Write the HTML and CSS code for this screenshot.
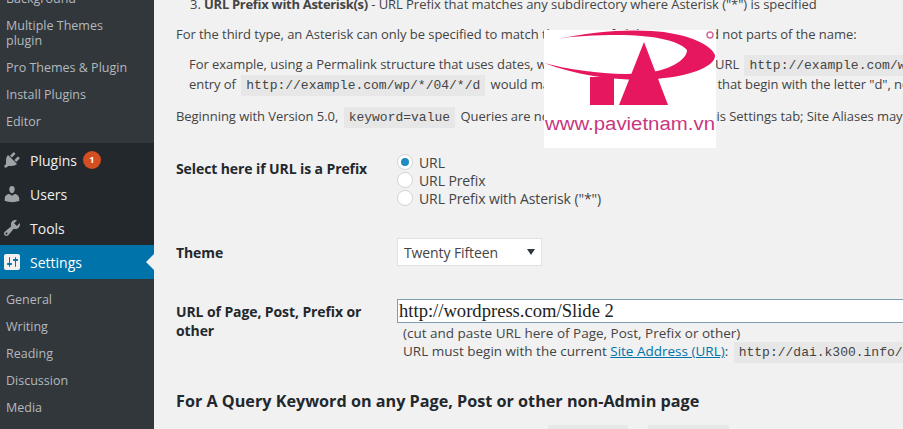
FILE: index.html
```html
<!DOCTYPE html>
<html lang="en">

<head>
    <meta charset="UTF-8">
    <title>Site settings</title>
    <link rel="stylesheet" href="styles.css">
</head>

<body>
    <div class="admin">
        <aside class="sidebar">
            <ul class="submenu submenu-top">
                <li>Background</li>
                <li>Multiple Themes plugin</li>
                <li>Pro Themes &amp; Plugin</li>
                <li>Install Plugins</li>
                <li>Editor</li>
            </ul>
            <ul class="menu">
                <li class="menu-item">
                    <svg class="menu-icon" viewBox="0 0 20 20"><path d="M13.11 4.36L9.87 7.6 8 5.73l3.24-3.24c.35-.34 1.05-.2 1.56.32.52.51.66 1.21.31 1.55zm-8 1.77l.91-1.12 9.01 9.01-1.19.84c-.71.71-2.63 1.16-3.82 1.16H6.14L4.9 17.26c-.59.59-1.54.59-2.12 0-.59-.58-.59-1.53 0-2.12l1.24-1.24v-3.88c0-1.13.4-3.19 1.09-3.89zm7.26 3.97l3.24-3.24c.34-.35 1.04-.21 1.55.31.52.51.66 1.21.31 1.55l-3.24 3.25z" /></svg>
                    <span>Plugins</span>
                    <span class="badge">1</span>
                </li>
                <li class="menu-item">
                    <svg class="menu-icon" viewBox="0 0 20 20"><path d="M10 9.25c-2.27 0-2.73-3.44-2.73-3.44C7 4.02 7.82 2 9.97 2c2.16 0 2.98 2.02 2.71 3.81 0 0-.41 3.44-2.68 3.44zm0 2.57L12.72 10c2.39 0 4.52 2.33 4.52 4.53v2.49s-3.65 1.13-7.24 1.13c-3.65 0-7.24-1.13-7.24-1.13v-2.49c0-2.25 1.94-4.48 4.47-4.48z" /></svg>
                    <span>Users</span>
                </li>
                <li class="menu-item">
                    <svg class="menu-icon" viewBox="0 0 20 20"><path d="M16.68 9.77c-1.34 1.34-3.3 1.67-4.95.99l-5.41 6.52c-.99.99-2.59.99-3.58 0s-.99-2.59 0-3.57l6.52-5.42c-.68-1.65-.35-3.61.99-4.95 1.28-1.28 3.12-1.62 4.72-1.06l-2.89 2.89 2.82 2.82 2.86-2.87c.53 1.58.18 3.39-1.08 4.65zM3.81 16.21c.4.39 1.04.39 1.43 0 .4-.4.4-1.04 0-1.43-.39-.4-1.03-.4-1.43 0-.39.39-.39 1.03 0 1.43z" /></svg>
                    <span>Tools</span>
                </li>
                <li class="menu-item active">
                    <svg class="menu-icon" viewBox="0 0 20 20"><path d="M18 16V4c0-1.100-.9-2-2-2H4c-1.100 0-2 .9-2 2v12c0 1.100.9 2 2 2h12c1.100 0 2-.9 2-2zM8 11h1c.55 0 1 .45 1 1s-.45 1-1 1H8v1.500c0 .28-.22.5-.5.5s-.5-.22-.5-.5V13H6c-.55 0-1-.45-1-1s.45-1 1-1h1V5.500c0-.28.22-.5.5-.5s.5.22.5.5V11zm5-2h-1c-.55 0-1-.45-1-1s.45-1 1-1h1V5.500c0-.28.22-.5.5-.5s.5.22.5.5V7h1c.55 0 1 .45 1 1s-.45 1-1 1h-1v5.500c0 .28-.22.5-.5.5s-.5-.22-.5-.5V9z" /></svg>
                    <span>Settings</span>
                </li>
            </ul>
            <ul class="submenu">
                <li>General</li>
                <li>Writing</li>
                <li>Reading</li>
                <li>Discussion</li>
                <li>Media</li>
                <li>Permalinks</li>
            </ul>
        </aside>

        <main class="content">
            <p class="line step">3. <b>URL Prefix with Asterisk(s)</b> - URL Prefix that matches any subdirectory where Asterisk ("*") is specified</p>
            <p class="line">For the third type, an Asterisk can only be specified to match the name of Slide or Post and not parts of the name:</p>
            <p class="line example">For example, using a Permalink structure that uses dates, where Year and Month are in URL <code>http://example.com/wp/2017/04/slide</code><br>entry of <code>http://example.com/wp/*/04/*/d</code> would match all of the Slides for April that begin with the letter "d", not</p>
            <p class="line">Beginning with Version 5.0, <code>keyword=value</code> Queries are now also fully supported on this Settings tab; Site Aliases may also be used</p>

            <div class="field field-type">
                <label class="field-label">Select here if URL is a Prefix</label>
                <div class="radios">
                    <div class="radio-row"><span class="radio checked"></span>URL</div>
                    <div class="radio-row"><span class="radio"></span>URL Prefix</div>
                    <div class="radio-row"><span class="radio"></span>URL Prefix with Asterisk ("*")</div>
                </div>
            </div>

            <div class="field field-theme">
                <label class="field-label">Theme</label>
                <div class="select">Twenty Fifteen<span class="select-arrow"></span></div>
            </div>

            <div class="field field-url">
                <label class="field-label">URL of Page, Post, Prefix or other</label>
                <div class="url-col">
                    <div class="url-input">http://wordpress.com/Slide 2</div>
                    <div class="url-note">(cut and paste URL here of Page, Post, Prefix or other)<br>URL must begin with the current <a href="#">Site Address (URL)</a>: <code>http://dai.k300.info/</code></div>
                </div>
            </div>

            <h2 class="section-title">For A Query Keyword on any Page, Post or other non-Admin page</h2>

            <div class="chips">
                <span class="chip"></span>
                <span class="chip chip-wide"></span>
            </div>
        </main>
    </div>

    <div class="logo">
        <svg viewBox="0 0 172 118" width="172" height="118">
            <path class="logo-pink" d="M13 9C45 2 80 -1 108 1C140 3 166 13 171 25C172 35 150 45 120 48C95 52 45 50 0 33C30 41 70 46 100 43C125 41 143 30 143 20C135 10 105 5 75 5C50 5 30 6 13 9Z" />
            <rect class="logo-pink" x="46" y="47" width="24" height="28" />
            <path class="logo-pink" d="M100 12L124 75H75Z" />
            <circle class="logo-mark" cx="166" cy="5" r="3" />
            <text class="logo-text" x="1" y="100" textLength="170" lengthAdjust="spacingAndGlyphs">www.pavietnam.vn</text>
        </svg>
    </div>
</body>

</html>
```

FILE: styles.css
```css
* {
    margin: 0;
    padding: 0;
    box-sizing: border-box;
}

html,
body {
    width: 903px;
    height: 429px;
    overflow: hidden;
}

body {
    background: #f1f1f1;
    font-family: "Open Sans", sans-serif;
    font-size: 13px;
    color: #444;
    position: relative;
}

ul {
    list-style: none;
}

.admin {
    display: flex;
    height: 429px;
    overflow: hidden;
}

.sidebar {
    width: 154px;
    flex-shrink: 0;
    background: #23282d;
    margin-top: -15px;
}

.submenu {
    background: #32373c;
    padding: 7px 0 8px;
    color: #b4b9be;
    font-size: 12.5px;
}

.submenu-top {
    padding-top: 0;
}

.submenu li {
    padding: 6px 20px 6px 6px;
    line-height: 15px;
}

.menu-item {
    display: flex;
    align-items: center;
    height: 34px;
    color: #eee;
    font-size: 14px;
    position: relative;
}

.menu-icon {
    width: 20px;
    height: 20px;
    margin: 0 8px 0 2px;
    fill: #9ea3a8;
    flex-shrink: 0;
}

.active {
    background: #0073aa;
    color: #fff;
}

.active .menu-icon {
    fill: #f1f1f1;
}

.active::after {
    content: "";
    position: absolute;
    right: 0;
    top: 9px;
    border: 8px solid transparent;
    border-right-color: #f1f1f1;
    border-left-width: 0;
}

.badge {
    width: 18px;
    height: 18px;
    margin-left: 6px;
    border-radius: 50%;
    background: #d54e21;
    color: #fff;
    font-size: 9px;
    font-weight: 700;
    text-align: center;
    line-height: 18px;
}

.content {
    flex: 1;
    min-width: 0;
    padding-left: 22px;
    margin-top: -5px;
    overflow: hidden;
}

.line {
    line-height: 18px;
    margin-bottom: 12px;
    white-space: nowrap;
    letter-spacing: -0.05px;
}

.step {
    padding-left: 14px;
}

.step b {
    letter-spacing: -0.3px;
}

.example {
    padding-left: 13px;
    line-height: 19px;
}

code {
    font-family: "Liberation Mono", monospace;
    font-size: 13px;
    letter-spacing: 0;
    background: #e7e7e7;
    padding: 3px 5px;
    margin: 0 2px;
}

.field {
    display: grid;
    grid-template-columns: 221px 1fr;
}

.field-label {
    font-weight: 700;
    font-size: 14px;
    letter-spacing: -0.1px;
    line-height: 19px;
    color: #23282d;
    padding-right: 25px;
}

.field-type {
    margin-top: 32px;
}

.radios {
    margin-top: -6px;
}

.radio-row {
    display: flex;
    align-items: center;
    height: 18px;
    font-size: 14px;
    letter-spacing: -0.1px;
}

.radio {
    width: 16px;
    height: 16px;
    margin-right: 6px;
    border: 1px solid #d5d5d5;
    border-radius: 50%;
    background: #fff;
    position: relative;
}

.checked::after {
    content: "";
    position: absolute;
    left: 3px;
    top: 3px;
    width: 8px;
    height: 8px;
    border-radius: 50%;
    background: #1e8cbe;
}

.field-theme {
    margin-top: 31px;
    align-items: center;
}

.select {
    display: flex;
    align-items: center;
    justify-content: space-between;
    width: 145px;
    height: 28px;
    padding: 0 6px 0 6px;
    background: #fff;
    border: 1px solid #e2e2e2;
    font-size: 14px;
    letter-spacing: -0.1px;
}

.select-arrow {
    border: 4px solid transparent;
    border-top: 6px solid #32373c;
    border-bottom-width: 0;
}

.field-url {
    margin-top: 33px;
}

.field-url .field-label {
    margin-top: 3px;
}

.url-col {
    min-width: 0;
}

.url-input {
    width: 520px;
    height: 24px;
    padding-left: 1px;
    background: #fff;
    border: 1px solid #7e9db0;
    font-family: "Liberation Serif", serif;
    font-size: 18.6px;
    line-height: 22px;
    color: #222;
}

.url-note {
    padding: 1px 0 0 6px;
    line-height: 18px;
    font-size: 13.5px;
    white-space: nowrap;
}

.url-note a {
    color: #0073aa;
}

.section-title {
    margin-top: 28px;
    font-size: 16.2px;
    line-height: 22px;
    font-weight: 700;
    color: #23282d;
}

.chips {
    display: flex;
    gap: 20px;
    margin: 13px 0 0 372px;
}

.chip {
    width: 80px;
    height: 20px;
    background: #e7e7e7;
}

.chip-wide {
    width: 81px;
}

.logo {
    position: absolute;
    left: 544px;
    top: 30px;
    width: 172px;
    height: 118px;
    background: #fff;
}

.logo svg {
    display: block;
}

.logo-pink {
    fill: #e6175f;
}

.logo-mark {
    fill: none;
    stroke: #d9699a;
    stroke-width: 1.5;
}

.logo-text {
    font-family: "Liberation Sans", sans-serif;
    font-size: 18px;
    fill: #c8387f;
}
```
